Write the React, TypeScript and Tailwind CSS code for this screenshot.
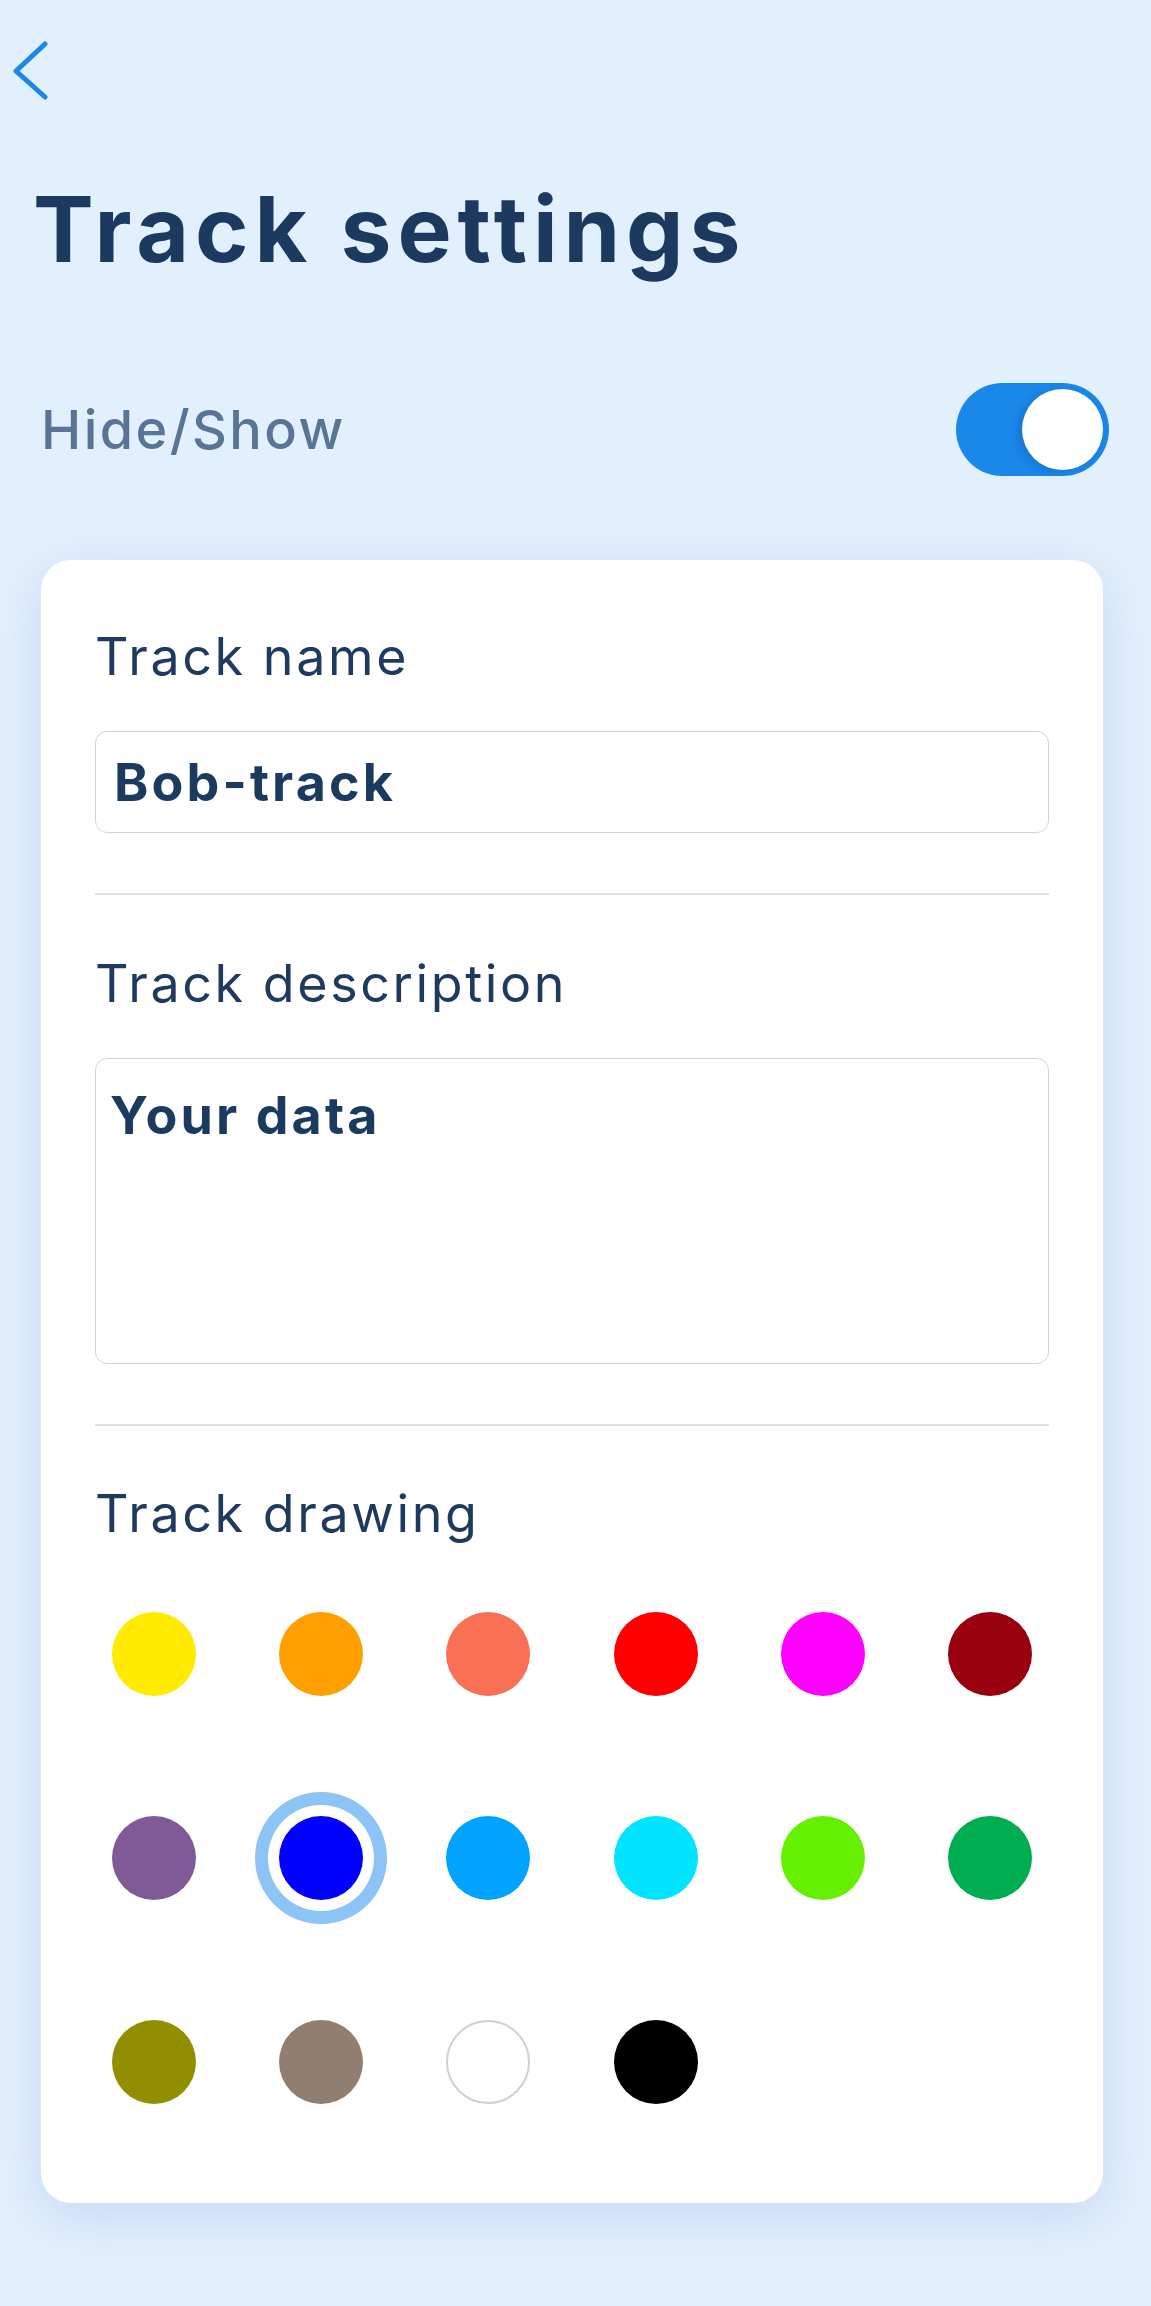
import { useState } from "react";

const COLORS = [
  "#ffea00",
  "#ffa000",
  "#fa7055",
  "#ff0000",
  "#ff00ff",
  "#990010",
  "#805a96",
  "#0000ff",
  "#00a3ff",
  "#00e5ff",
  "#64f000",
  "#00ad50",
  "#918f00",
  "#917e6e",
  "#ffffff",
  "#000000",
];

export default function App() {
  const [visible, setVisible] = useState(true);
  const [selected, setSelected] = useState("#0000ff");

  return (
    <div className="min-h-[2306px] bg-[#e2effd] pt-[38px] font-['Inter',sans-serif]">
      <button className="ml-[10px] block">
        <svg width="40" height="62" viewBox="0 0 40 62" fill="none">
          <path d="M35 6 L6 33 L35 59" stroke="#1a87ea" strokeWidth="5" strokeLinecap="round" strokeLinejoin="round" />
        </svg>
      </button>

      <h1 className="ml-[33px] mt-[84px] text-[91px] font-bold leading-none tracking-[0.065em] text-[#1c3a5f]">
        Track settings
      </h1>

      <div className="ml-[41px] mr-[42px] mt-[108px] flex items-center justify-between">
        <span className="text-[54px] font-medium leading-none tracking-[0.045em] text-[#5a7496]">Hide/Show</span>
        <button
          onClick={() => setVisible(!visible)}
          className={`flex h-[93px] w-[153px] items-center rounded-full p-[6px] ${visible ? "justify-end bg-[#1a87ea]" : "justify-start bg-[#b8c6d8]"}`}
        >
          <span className="h-[81px] w-[81px] rounded-full bg-white shadow-[-4px_2px_8px_rgba(0,40,100,0.18)]" />
        </button>
      </div>

      <div className="ml-[41px] mr-[48px] mt-[84px] rounded-[30px] bg-white px-[54px] pb-[99px] pt-[71px] shadow-[0_14px_48px_rgba(150,180,225,0.35)]">
        <label className="block text-[52px] leading-none tracking-[0.05em] text-[#1e3a5f]">Track name</label>
        <input
          defaultValue="Bob-track"
          className="mt-[48px] block h-[102px] w-full rounded-[12px] border border-[#d0d5dc] px-[18px] text-[52px] font-bold tracking-[0.06em] text-[#1b3a5f] outline-none"
        />

        <div className="mt-[60px] h-[2px] bg-[#dde2ea]" />

        <label className="mt-[63px] block text-[52px] leading-none tracking-[0.05em] text-[#1e3a5f]">
          Track description
        </label>
        <textarea
          defaultValue="Your data"
          className="mt-[48px] block h-[306px] w-full resize-none rounded-[12px] border border-[#d0d5dc] px-[14px] pt-[31px] text-[52px] font-bold leading-none tracking-[0.06em] text-[#1b3a5f] outline-none"
        />

        <div className="mt-[60px] h-[2px] bg-[#dde2ea]" />

        <label className="mt-[62px] block text-[52px] leading-none tracking-[0.05em] text-[#1e3a5f]">Track drawing</label>
        <div className="mt-[72px] grid grid-cols-[repeat(6,84px)] justify-between gap-y-[120px] px-[17px]">
          {COLORS.map((c) => (
            <button
              key={c}
              onClick={() => setSelected(c)}
              style={{ backgroundColor: c }}
              className={`h-[84px] w-[84px] rounded-full ${c === "#ffffff" ? "border-2 border-[#c9d1dc]" : ""} ${selected === c ? "shadow-[0_0_0_11px_#ffffff,0_0_0_24px_#8cc4f5]" : ""}`}
            />
          ))}
        </div>
      </div>
    </div>
  );
}
